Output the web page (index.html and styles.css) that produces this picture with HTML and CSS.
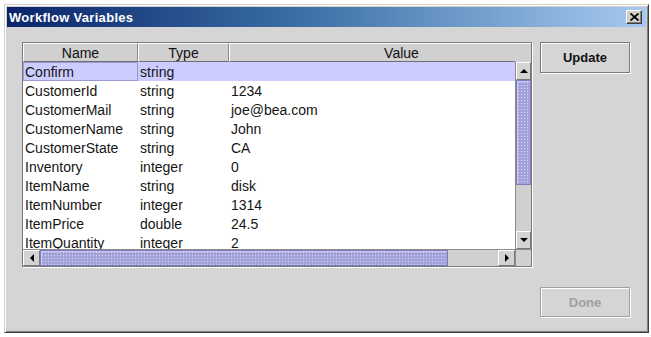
FILE: index.html
```html
<!DOCTYPE html>
<html lang="en">
<head>
    <meta charset="UTF-8">
    <title>Workflow Variables</title>
    <link rel="stylesheet" href="styles.css">
</head>
<body>
    <div class="window">
        <div class="titlebar">
            <span class="title">Workflow Variables</span>
            <button class="close" type="button">
                <svg width="9" height="8" viewBox="0 0 9 8"><path d="M0.5 0.5 L8.5 7.5 M8.5 0.5 L0.5 7.5" stroke="#000" stroke-width="1.8"/></svg>
            </button>
        </div>

        <div class="content">
            <div class="pane">
                <div class="header-view">
                    <div class="header">
                        <div class="hcell c-name">Name</div>
                        <div class="hcell c-type">Type</div>
                        <div class="hcell c-value">Value</div>
                    </div>
                </div>
                <div class="corner-top"></div>

                <div class="body-view">
                    <table class="vars">
                        <colgroup>
                            <col class="c-name"><col class="c-type"><col class="c-value">
                        </colgroup>
                        <tr class="selected"><td class="focus">Confirm</td><td>string</td><td></td></tr>
                        <tr><td>CustomerId</td><td>string</td><td>1234</td></tr>
                        <tr><td>CustomerMail</td><td>string</td><td>joe@bea.com</td></tr>
                        <tr><td>CustomerName</td><td>string</td><td>John</td></tr>
                        <tr><td>CustomerState</td><td>string</td><td>CA</td></tr>
                        <tr><td>Inventory</td><td>integer</td><td>0</td></tr>
                        <tr><td>ItemName</td><td>string</td><td>disk</td></tr>
                        <tr><td>ItemNumber</td><td>integer</td><td>1314</td></tr>
                        <tr><td>ItemPrice</td><td>double</td><td>24.5</td></tr>
                        <tr><td>ItemQuantity</td><td>integer</td><td>2</td></tr>
                    </table>
                </div>

                <div class="vscroll">
                    <div class="arrow up"><span class="tri tri-up"></span></div>
                    <div class="track vtrack"><div class="thumb vthumb"></div></div>
                    <div class="arrow down"><span class="tri tri-down"></span></div>
                </div>

                <div class="hscroll">
                    <div class="arrow left"><span class="tri tri-left"></span></div>
                    <div class="track htrack"><div class="thumb hthumb"></div></div>
                    <div class="arrow right"><span class="tri tri-right"></span></div>
                </div>
                <div class="corner"></div>
            </div>

            <div class="buttons">
                <button class="btn" type="button">Update</button>
                <button class="btn done" type="button" disabled>Done</button>
            </div>
        </div>
    </div>
</body>
</html>
```

FILE: styles.css
```css
body {
    margin: 0;
    background-color: #fff;
    font-family: "Liberation Sans", Arial, sans-serif;
}

.window {
    box-sizing: border-box;
    width: 645px;
    height: 329px;
    margin: 4px 0 0 4px;
    padding: 2px;
    display: flex;
    flex-direction: column;
    background-color: #d4d0c8;
    border: 1px solid;
    border-color: #d4d0c8 #404040 #404040 #d4d0c8;
    box-shadow: inset 1px 1px 0 #fff, inset -1px -1px 0 #808080;
}

.titlebar {
    height: 20px;
    display: flex;
    align-items: center;
    justify-content: space-between;
    padding: 0 4px 0 2px;
    background: linear-gradient(to right, #0a246a 0%, #3a6ea5 45%, #a6caf0 100%);
}

.title {
    color: #fff;
    font-weight: bold;
    font-size: 13px;
    letter-spacing: 0.3px;
}

.close {
    box-sizing: border-box;
    width: 16px;
    height: 14px;
    padding: 0;
    display: flex;
    align-items: center;
    justify-content: center;
    background-color: #d4d0c8;
    border: 1px solid;
    border-color: #fff #404040 #404040 #fff;
    box-shadow: inset -1px -1px 0 #808080;
}

.content {
    flex: 1;
    display: flex;
    align-items: stretch;
    gap: 8px;
    padding: 15px 15px 13px 15px;
    background-color: #d5d5d5;
}

/* scroll pane */

.pane {
    box-sizing: border-box;
    width: 510px;
    height: 225px;
    display: grid;
    grid-template-columns: 492px 16px;
    grid-template-rows: 19px 187px 17px;
    border: 1px solid #7a7a7a;
    box-shadow: 1px 1px 0 #fff;
    background-color: #cfcfcf;
}

.header-view,
.body-view {
    overflow: hidden;
}

.header {
    display: flex;
    width: 551px;
    height: 19px;
}

.hcell {
    box-sizing: border-box;
    height: 19px;
    line-height: 18px;
    text-align: center;
    font-size: 14px;
    color: #111;
    background-color: #d0d0d0;
    border-top: 1px solid #fff;
    border-left: 1px solid #fff;
    border-right: 1px solid #8a8a8a;
    border-bottom: 1px solid #6e6e6e;
}

.c-name { width: 115px; }
.c-type { width: 91px; }
.c-value { width: 345px; }

.corner-top {
    background-color: #d0d0d0;
    border-top: 1px solid #fff;
}

.body-view {
    background-color: #fff;
}

.vars {
    width: 551px;
    table-layout: fixed;
    border-collapse: collapse;
    font-size: 14px;
}

.vars td {
    box-sizing: border-box;
    height: 19px;
    padding: 2px 0 0 2px;
    line-height: 17px;
    white-space: nowrap;
    overflow: hidden;
    color: #151515;
}

.vars tr.selected td {
    background-color: #ccccff;
}

.vars td.focus {
    outline: 1px solid #9a9ad0;
    outline-offset: -1px;
}

/* scroll bars */

.vscroll,
.hscroll {
    display: flex;
    background-color: #d0d0d0;
}

.vscroll {
    flex-direction: column;
    border-left: 1px solid #8a8a8a;
}

.hscroll {
    border-top: 1px solid #8a8a8a;
}

.arrow {
    box-sizing: border-box;
    display: flex;
    align-items: center;
    justify-content: center;
    background-color: #d3d3d3;
    border: 1px solid;
    border-color: #fff #7a7a7a #7a7a7a #fff;
}

.vscroll .arrow {
    width: 15px;
    height: 18px;
}

.hscroll .arrow {
    width: 17px;
    height: 16px;
}

.track {
    flex: 1;
    background-color: #d0d0d0;
}

.thumb {
    box-sizing: border-box;
    background-color: #a3a3d9;
    background-image: radial-gradient(#d6d6ff 0.7px, transparent 0.9px);
    background-size: 3px 3px;
    border: 1px solid #7d7dbd;
    box-shadow: inset 1px 1px 0 #c9c9f5;
}

.vthumb {
    width: 15px;
    height: 105px;
}

.htrack {
    display: flex;
}

.hthumb {
    width: 408px;
    height: 16px;
}

.corner {
    background-color: #d0d0d0;
    border-left: 1px solid #8a8a8a;
    border-top: 1px solid #8a8a8a;
}

.tri {
    width: 0;
    height: 0;
    border-style: solid;
}

.tri-up {
    border-width: 0 4px 4px 4px;
    border-color: transparent transparent #000 transparent;
}

.tri-down {
    border-width: 4px 4px 0 4px;
    border-color: #000 transparent transparent transparent;
}

.tri-left {
    border-width: 4px 4px 4px 0;
    border-color: transparent #000 transparent transparent;
}

.tri-right {
    border-width: 4px 0 4px 4px;
    border-color: transparent transparent transparent #000;
}

/* buttons */

.buttons {
    width: 90px;
    display: flex;
    flex-direction: column;
    justify-content: space-between;
}

.btn {
    box-sizing: border-box;
    width: 90px;
    height: 31px;
    font-family: "Liberation Sans", Arial, sans-serif;
    font-size: 13px;
    font-weight: bold;
    color: #111;
    background-color: #d5d5d5;
    border: 1px solid #7a7a7a;
    box-shadow: inset 1px 1px 0 #fff, 1px 1px 0 #fff;
}

.done {
    height: 30px;
    color: #a0a0a0;
    border-color: #a0a0a0;
}
```
